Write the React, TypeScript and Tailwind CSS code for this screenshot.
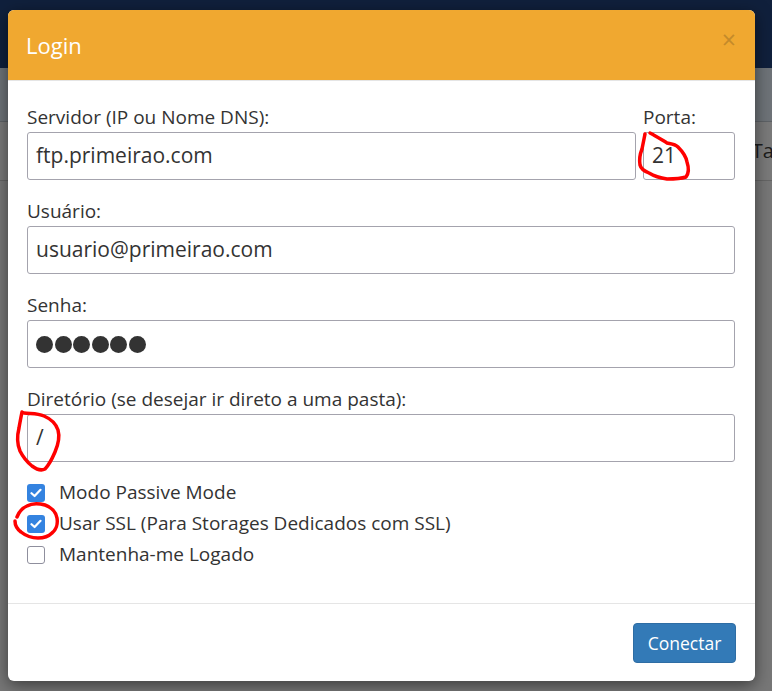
import React from "react";

const font = { fontFamily: '"Open Sans", "Noto Sans", sans-serif' };

function Field({ label, children }: { label: string; children: React.ReactNode }) {
  return (
    <div className="flex flex-col">
      <label className="h-[24px] leading-[24px] text-[19px] text-[#333] mb-[3px] whitespace-nowrap">{label}</label>
      {children}
    </div>
  );
}

function TextBox({ value, className = "" }: { value: React.ReactNode; className?: string }) {
  return (
    <div
      className={
        "h-[48px] border border-[#a4a3ad] rounded-[3px] bg-white flex items-center pl-[8px] text-[21px] text-[#333] " +
        className
      }
    >
      {value}
    </div>
  );
}

function Check({ checked, label }: { checked: boolean; label: string }) {
  return (
    <div className="h-[31px] flex items-center">
      {checked ? (
        <span className="w-[18px] h-[18px] rounded-[3px] bg-[#3483e0] flex items-center justify-center">
          <svg width="12" height="10" viewBox="0 0 12 10">
            <path d="M1.5 5.2 L4.6 8 L10.5 1.8" fill="none" stroke="white" strokeWidth="2.2" strokeLinecap="round" strokeLinejoin="round" />
          </svg>
        </span>
      ) : (
        <span className="w-[18px] h-[18px] rounded-[3px] bg-white border border-[#8f8f9d]" />
      )}
      <span className="ml-[14px] text-[19px] text-[#333]">{label}</span>
    </div>
  );
}

export default function App() {
  return (
    <div className="relative w-[772px] h-[691px] overflow-hidden bg-[#777]" style={font}>
      {/* dimmed page behind the dialog */}
      <div className="flex flex-col">
        <div className="h-[68px] bg-[#10203c]" />
        <div className="h-[54px] bg-[#6e7378] border-b border-[#5e6266]" />
        <div className="h-[59px] bg-[#7a7a7a] border-b border-[#656565] flex items-center justify-end">
          <span className="text-[20px] text-[#1c1c1c] mr-[-10px]">Tar</span>
        </div>
        <div className="flex-1 bg-[#777]" />
      </div>

      {/* dialog */}
      <div className="absolute left-[8px] top-[10px] w-[747px] h-[671px] bg-white rounded-[6px] shadow-[0_4px_16px_rgba(0,0,0,0.5)] overflow-hidden flex flex-col">
        <div className="h-[71px] bg-[#f0a830] border-b border-[#e5e5e5] flex items-center justify-between pl-[18px] pr-[19px] shrink-0">
          <span className="text-[22px] text-white">Login</span>
          <span className="text-[25px] text-[#c48a2a] leading-none mt-[-12px]">×</span>
        </div>

        <div className="flex flex-col pl-[19px] pr-[20px] pt-[24px] flex-1">
          <div className="flex gap-[7px]">
            <div className="flex-1">
              <Field label="Servidor (IP ou Nome DNS):">
                <TextBox value="ftp.primeirao.com" />
              </Field>
            </div>
            <div className="w-[92px]">
              <Field label="Porta:">
                <TextBox value="21" />
              </Field>
            </div>
          </div>
          <div className="mt-[19px]">
            <Field label="Usuário:">
              <TextBox value="usuario@primeirao.com" />
            </Field>
          </div>
          <div className="mt-[19px]">
            <Field label="Senha:">
              <TextBox
                value={
                  <span className="flex gap-[1.5px]">
                    {[0, 1, 2, 3, 4, 5].map((i) => (
                      <span key={i} className="w-[17px] h-[17px] rounded-full bg-[#333]" />
                    ))}
                  </span>
                }
              />
            </Field>
          </div>
          <div className="mt-[19px]">
            <Field label="Diretório (se desejar ir direto a uma pasta):">
              <TextBox value="/" />
            </Field>
          </div>
          <div className="mt-[15px] flex flex-col">
            <Check checked label="Modo Passive Mode" />
            <Check checked label="Usar SSL (Para Storages Dedicados com SSL)" />
            <Check checked={false} label="Mantenha-me Logado" />
          </div>
        </div>

        <div className="border-t border-[#e5e5e5] h-[78px] flex items-start justify-end pt-[19px] pr-[19px] shrink-0">
          <button className="w-[103px] h-[40px] rounded-[4px] bg-[#337ab7] border border-[#2e6da4] text-white text-[17.5px]">
            Conectar
          </button>
        </div>
      </div>

      {/* hand-drawn red marks */}
      <svg className="absolute inset-0 pointer-events-none" width="772" height="691" viewBox="0 0 772 691">
        <g fill="none" stroke="#ff0000" strokeWidth="3.5" strokeLinecap="round" strokeLinejoin="round">
          <path d="M650 133 C656 136 662 140 667 143 C672 144 675 144 678 147 C683 152 686 156 687 162 C689 168 689 173 686 177 C680 179 674 179 667 179 C660 178 654 176 649 173 C644 171 641 169 640 165 C639 159 640 154 642 149 C643 144 644 139 645 134" />
          <path d="M24 413 C30 414 37 413 44 416 C51 419 56 424 58 430 C60 437 58 445 55 452 C52 459 49 465 45 469 C41 471 36 469 32 466 C27 462 23 457 20 451 C17 444 17 436 19 428 C20 422 21 417 22 412" />
          <path d="M17 517 C19 512 22 508 27 506 C32 503 38 503 45 505 C51 507 56 512 57 518 C58 524 56 530 52 533 C48 537 43 538 38 538 C32 538 26 536 21 532 C17 529 15 525 15 521" />
        </g>
      </svg>
    </div>
  );
}
